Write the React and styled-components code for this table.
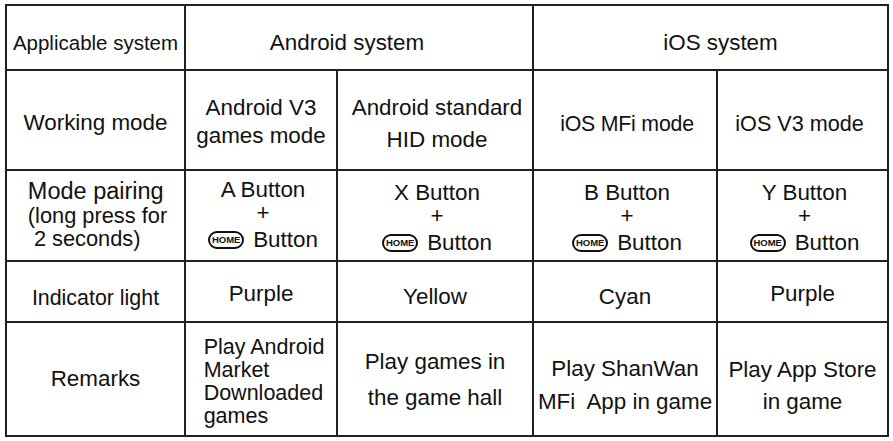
import styled, { createGlobalStyle } from 'styled-components';

const GlobalStyle = createGlobalStyle`
  html, body {
    margin: 0;
    padding: 0;
    background: #ffffff;
  }
  body {
    font-family: "Liberation Sans", Arial, sans-serif;
    color: #111111;
  }
`;

const Page = styled.div`
  padding: 4px 0 0 5px;
`;

const Table = styled.div`
  display: grid;
  grid-template-columns: 177px 150px 194px 182px 169px;
  grid-template-rows: 63px 98px 89px 59px 112px;
  gap: 2px;
  padding: 2px;
  width: max-content;
  background: #202020;
`;

// $dy moves the text block down (+) or up (-), $dx right (+) or left (-)
const Cell = styled.div`
  grid-column: span ${(p) => p.$span || 1};
  background: #ffffff;
  display: flex;
  align-items: center;
  justify-content: center;
  padding-top: ${(p) => (p.$dy > 0 ? p.$dy * 2 : 0)}px;
  padding-bottom: ${(p) => (p.$dy < 0 ? -p.$dy * 2 : 0)}px;
  padding-left: ${(p) => (p.$dx > 0 ? p.$dx * 2 : 0)}px;
  padding-right: ${(p) => (p.$dx < 0 ? -p.$dx * 2 : 0)}px;
  box-sizing: border-box;
  overflow: hidden;
`;

const Text = styled.div`
  font-size: ${(p) => p.$size || 22.4}px;
  line-height: ${(p) => p.$lh || 26}px;
  text-align: ${(p) => p.$align || 'center'};
  letter-spacing: ${(p) => p.$ls || 0}px;
  white-space: pre;
`;

const Big = styled.span`
  font-size: 23.5px;
`;

const HomeLine = styled.span`
  display: inline-flex;
  align-items: center;
  gap: 9px;
`;

const HomeKey = styled.span`
  display: inline-flex;
  align-items: center;
  justify-content: center;
  width: 32px;
  height: 14px;
  border: 2.5px solid #111111;
  border-radius: 10px;
  font-size: 9.5px;
  line-height: 1;
  font-weight: bold;
  color: #111111;
`;

const Home = () => (
  <HomeLine>
    <HomeKey>HOME</HomeKey>
    <span>Button</span>
  </HomeLine>
);

const Pairing = ({ letter, dy, dx }) => (
  <Cell $dy={dy} $dx={dx}>
    <Text $lh={23}>
      {letter} Button
      <br />+
      <br />
      <Home />
    </Text>
  </Cell>
);

export default function App() {
  return (
    <>
      <GlobalStyle />
      <Page>
        <Table>
          <Cell $dy={5}>
            <Text $size={20.5}>Applicable system</Text>
          </Cell>
          <Cell $span={2} $dy={5} $dx={-12}>
            <Text>Android system</Text>
          </Cell>
          <Cell $span={2} $dy={5} $dx={10}>
            <Text>iOS system</Text>
          </Cell>

          <Cell $dy={3}>
            <Text>Working mode</Text>
          </Cell>
          <Cell $dy={2}>
            <Text $lh={28}>
              Android V3
              <br />
              games mode
            </Text>
          </Cell>
          <Cell $dy={4} $dx={2}>
            <Text $lh={32}>
              Android standard
              <br />
              HID mode
            </Text>
          </Cell>
          <Cell $dy={4} $dx={2}>
            <Text $size={21.3} $ls={-0.2}>iOS MFi mode</Text>
          </Cell>
          <Cell $dy={4} $dx={-3}>
            <Text $size={21.6}>iOS V3 mode</Text>
          </Cell>

          <Cell $dy={0} $dx={2}>
            <Text $size={21.8} $lh={23.5} $align="left">
              <Big>Mode pairing</Big>
              <br />
              (long press for
              <br /> 2 seconds)
            </Text>
          </Cell>
          <Pairing letter="A" dy={-1} dx={2} />
          <Pairing letter="X" dy={2} dx={2} />
          <Pairing letter="B" dy={2} dx={2} />
          <Pairing letter="Y" dy={2} dx={2} />

          <Cell $dy={6}>
            <Text $size={21.4}>Indicator light</Text>
          </Cell>
          <Cell $dy={2}>
            <Text>Purple</Text>
          </Cell>
          <Cell $dy={5}>
            <Text>Yellow</Text>
          </Cell>
          <Cell $dy={5}>
            <Text>Cyan</Text>
          </Cell>
          <Cell $dy={2}>
            <Text>Purple</Text>
          </Cell>

          <Cell $dy={0}>
            <Text>Remarks</Text>
          </Cell>
          <Cell $dy={3} $dx={3}>
            <Text $size={21.5} $lh={23} $align="left">
              Play Android
              <br />
              Market
              <br />
              Downloaded
              <br />
              games
            </Text>
          </Cell>
          <Cell $dy={1}>
            <Text $lh={36}>
              Play games in
              <br />
              the game hall
            </Text>
          </Cell>
          <Cell $dy={6}>
            <Text $lh={33}>
              Play ShanWan
              <br />
              MFi  App in game
            </Text>
          </Cell>
          <Cell $dy={7}>
            <Text $lh={32}>
              Play App Store
              <br />
              in game
            </Text>
          </Cell>
        </Table>
      </Page>
    </>
  );
}
